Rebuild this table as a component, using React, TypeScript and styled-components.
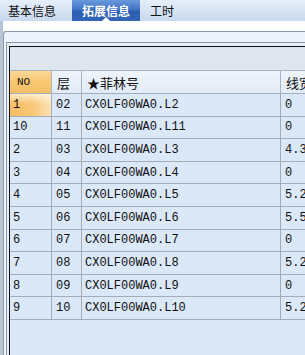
import React from "react";
import styled, { createGlobalStyle, css } from "styled-components";

const Global = createGlobalStyle`
  html, body { margin: 0; padding: 0; background: #dbe8f8; overflow: hidden; }
  * { box-sizing: border-box; }
`;

const CJK = `"Noto Sans CJK SC", "Noto Sans", sans-serif`;
const MONO = `"Liberation Mono", "Noto Sans CJK SC", monospace`;

const Screen = styled.div`
  width: 305px;
  height: 355px;
  overflow: hidden;
  display: flex;
  flex-direction: column;
  background: #b9c5d3;
`;

const TabBar = styled.div`
  height: 21px;
  flex: none;
  display: flex;
  align-items: stretch;
  background: linear-gradient(180deg, #e6eff9 0%, #d6e3f3 50%, #c8d9ee 100%);
`;

const Tab = styled.div<{ $active?: boolean }>`
  position: relative;
  display: flex;
  align-items: center;
  padding: 0 10px;
  font-family: ${CJK};
  font-size: 12px;
  color: #111;
  white-space: nowrap;
  &:first-child { padding: 0 8px; margin-right: 8px; }
  ${(p) =>
    p.$active &&
    css`
      color: #fff;
      font-weight: 700;
      background: linear-gradient(180deg, #6a9ade 0%, #3f73c4 45%, #2a5cb0 55%, #3366b8 100%);
      &::after {
        content: "";
        position: absolute;
        left: 50%;
        bottom: 0;
        margin-left: -4px;
        border-left: 4px solid transparent;
        border-right: 4px solid transparent;
        border-bottom: 4px solid #fff;
      }
    `}
`;

const Body = styled.div`
  flex: 1;
  display: flex;
  flex-direction: column;
  padding-left: 3px;
  background: #b9c5d3;
  min-height: 0;
`;

const Page = styled.div`
  flex: 1;
  display: flex;
  flex-direction: column;
  padding-top: 10px;
  background: #ffffff;
  min-height: 0;
`;

const Frame = styled.div`
  flex: 1;
  display: flex;
  flex-direction: column;
  border-top: 1px solid #8a97a8;
  border-left: 1px solid #8a97a8;
  border-top-left-radius: 3px;
  background: #eef4fc;
  padding: 10px 0 0 2px;
  min-height: 0;
`;

const Inner = styled.div`
  flex: 1;
  display: flex;
  flex-direction: column;
  border-top: 1px solid #8a97a8;
  border-left: 1px solid #8a97a8;
  background: #e8eff8;
  padding: 3px 0 0 2px;
  min-height: 0;
`;

const Grid = styled.div`
  flex: 1;
  display: flex;
  flex-direction: column;
  border-top: 1px solid #141414;
  border-left: 1px solid #141414;
  background: #dbe8f8;
  min-height: 0;
`;

const GroupBand = styled.div`
  height: 23px;
  flex: none;
  background: #dfe6ef;
`;

const COLS = "42px 30px 199px 200px";

const HeaderRow = styled.div`
  display: grid;
  grid-template-columns: ${COLS};
  height: 24px;
  flex: none;
  border-top: 1px solid #a9b4c2;
  border-bottom: 1px solid #a3adb9;
  background: linear-gradient(180deg, #eef4fb 0%, #e2ebf6 100%);
`;

const HeadCell = styled.div<{ $sorted?: boolean }>`
  display: flex;
  align-items: center;
  padding-left: ${(p) => (p.$sorted ? "7px" : "5px")};
  border-right: 1px solid #a9b4c2;
  font-family: ${(p) => (p.$sorted ? MONO : CJK)};
  font-size: ${(p) => (p.$sorted ? "11px" : "13px")};
  color: #111;
  white-space: nowrap;
  overflow: hidden;
  ${(p) =>
    p.$sorted &&
    css`
      background: linear-gradient(180deg, #fbd894 0%, #f7c772 50%, #f5c066 100%);
    `}
`;

const Row = styled.div`
  display: grid;
  grid-template-columns: ${COLS};
  height: 22.6px;
  flex: none;
  border-bottom: 1px solid #a3acb8;
`;

const Cell = styled.div<{ $focused?: boolean; $pad?: number }>`
  display: flex;
  align-items: center;
  padding-left: ${(p) => p.$pad ?? 3}px;
  border-right: 1px solid #a3acb8;
  font-family: ${MONO};
  font-size: 12px;
  color: #111;
  white-space: nowrap;
  overflow: hidden;
  ${(p) =>
    p.$focused &&
    css`
      background:
        linear-gradient(180deg, rgba(255, 250, 235, 0.75) 0%, rgba(255, 250, 235, 0) 45%),
        linear-gradient(90deg, #f6bd62 0%, #f8c877 55%, #fce2b6 100%);
    `}
`;

const rows: [string, string, string, string][] = [
  ["1", "02", "CX0LF00WA0.L2", "0"],
  ["10", "11", "CX0LF00WA0.L11", "0"],
  ["2", "03", "CX0LF00WA0.L3", "4.3"],
  ["3", "04", "CX0LF00WA0.L4", "0"],
  ["4", "05", "CX0LF00WA0.L5", "5.2"],
  ["5", "06", "CX0LF00WA0.L6", "5.5"],
  ["6", "07", "CX0LF00WA0.L7", "0"],
  ["7", "08", "CX0LF00WA0.L8", "5.2"],
  ["8", "09", "CX0LF00WA0.L9", "0"],
  ["9", "10", "CX0LF00WA0.L10", "5.2"],
];

export default function App() {
  return (
    <>
      <Global />
      <Screen>
        <TabBar>
          <Tab>基本信息</Tab>
          <Tab $active>拓展信息</Tab>
          <Tab>工时</Tab>
        </TabBar>
        <Body>
          <Page>
            <Frame>
              <Inner>
                <Grid>
                  <GroupBand />
                  <HeaderRow>
                    <HeadCell $sorted>NO</HeadCell>
                    <HeadCell>层</HeadCell>
                    <HeadCell>★菲林号</HeadCell>
                    <HeadCell>线宽</HeadCell>
                  </HeaderRow>
                  {rows.map((r, i) => (
                    <Row key={i}>
                      <Cell $focused={i === 0}>{r[0]}</Cell>
                      <Cell $pad={4}>{r[1]}</Cell>
                      <Cell>{r[2]}</Cell>
                      <Cell $pad={4}>{r[3]}</Cell>
                    </Row>
                  ))}
                </Grid>
              </Inner>
            </Frame>
          </Page>
        </Body>
      </Screen>
    </>
  );
}
